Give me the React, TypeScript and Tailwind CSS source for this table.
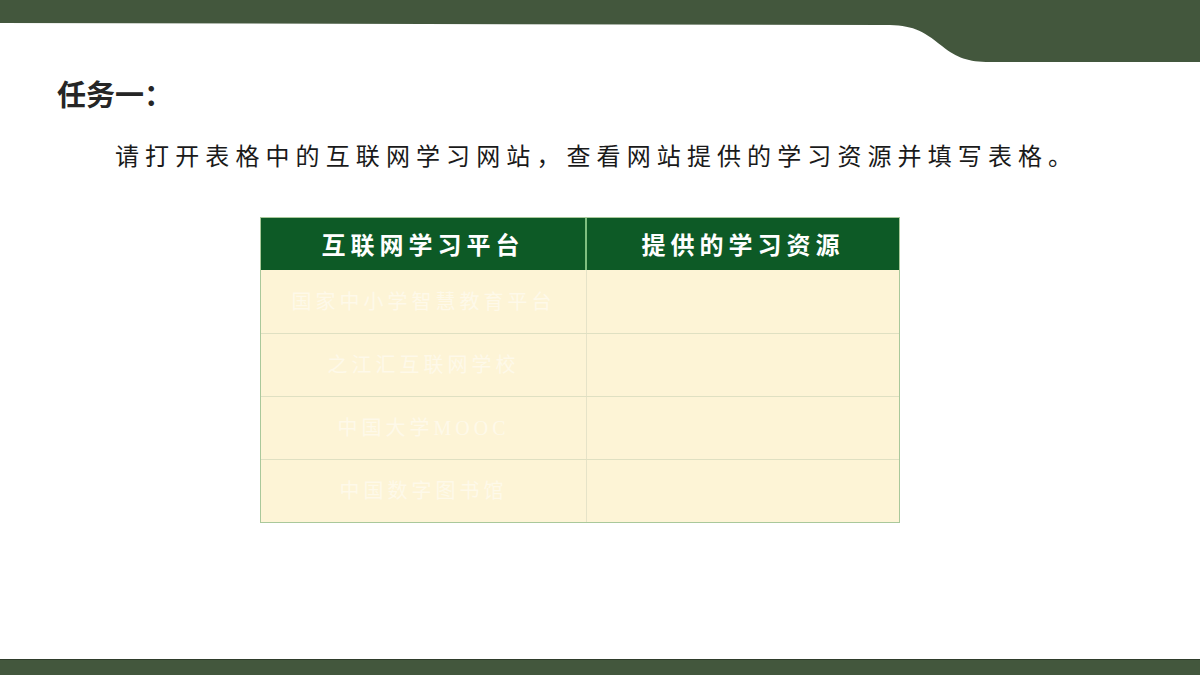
import React from 'react';

const rows = ['国家中小学智慧教育平台', '之江汇互联网学校', '中国大学MOOC', '中国数字图书馆'];

const cjk = { fontFamily: '"Noto Sans CJK SC", "Noto Sans", sans-serif' };
const serif = { fontFamily: '"Liberation Serif", "Noto Sans CJK SC", serif' };

export default function App() {
  return (
    <div className="relative w-[1200px] h-[675px] overflow-hidden bg-white flex flex-col" style={cjk}>
      {/* top wave band */}
      <svg className="absolute left-0 top-0" width="1200" height="64" viewBox="0 0 1200 64">
        <path
          d="M0 0 H1200 V62 H990 C968 62 957 58 942 46 C922 30 912 25 885 25 L0 23 Z"
          fill="#43573d"
        />
      </svg>

      <div className="pt-[73px] pl-[57px]">
        <h1 className="text-[29px] leading-[40px] font-bold text-[#262626]">任务一：</h1>
      </div>

      <p className="mt-[26px] pl-[115px] text-[24px] leading-[32px] tracking-[6.1px] text-[#1a1a1a]">
        请打开表格中的互联网学习网站，查看网站提供的学习资源并填写表格。
      </p>

      <div className="mt-[46px] ml-[260px] w-[640px] border border-[#a9c89b] bg-[#fdf4d6]">
        <div className="grid grid-cols-[326px_1fr] h-[52px] bg-[#0d5a26] text-white text-[24px] font-bold tracking-[5px]">
          <div className="flex items-center justify-center border-r-2 border-[#7fbf80]">互联网学习平台</div>
          <div className="flex items-center justify-center">提供的学习资源</div>
        </div>
        {rows.map((r, i) => (
          <div
            key={r}
            className={`grid grid-cols-[326px_1fr] h-[63px] ${i > 0 ? 'border-t border-[#dfe0c2]' : ''}`}
          >
            <div
              className="flex items-center justify-center border-r border-[#e6e3c8] text-[20px] tracking-[4px] text-[#fef9e9]"
              style={serif}
            >
              {r}
            </div>
            <div />
          </div>
        ))}
      </div>

      <div className="absolute left-0 bottom-0 w-full h-[16px] bg-[#43573d] border-t border-[#2f3d2b]" />
    </div>
  );
}
